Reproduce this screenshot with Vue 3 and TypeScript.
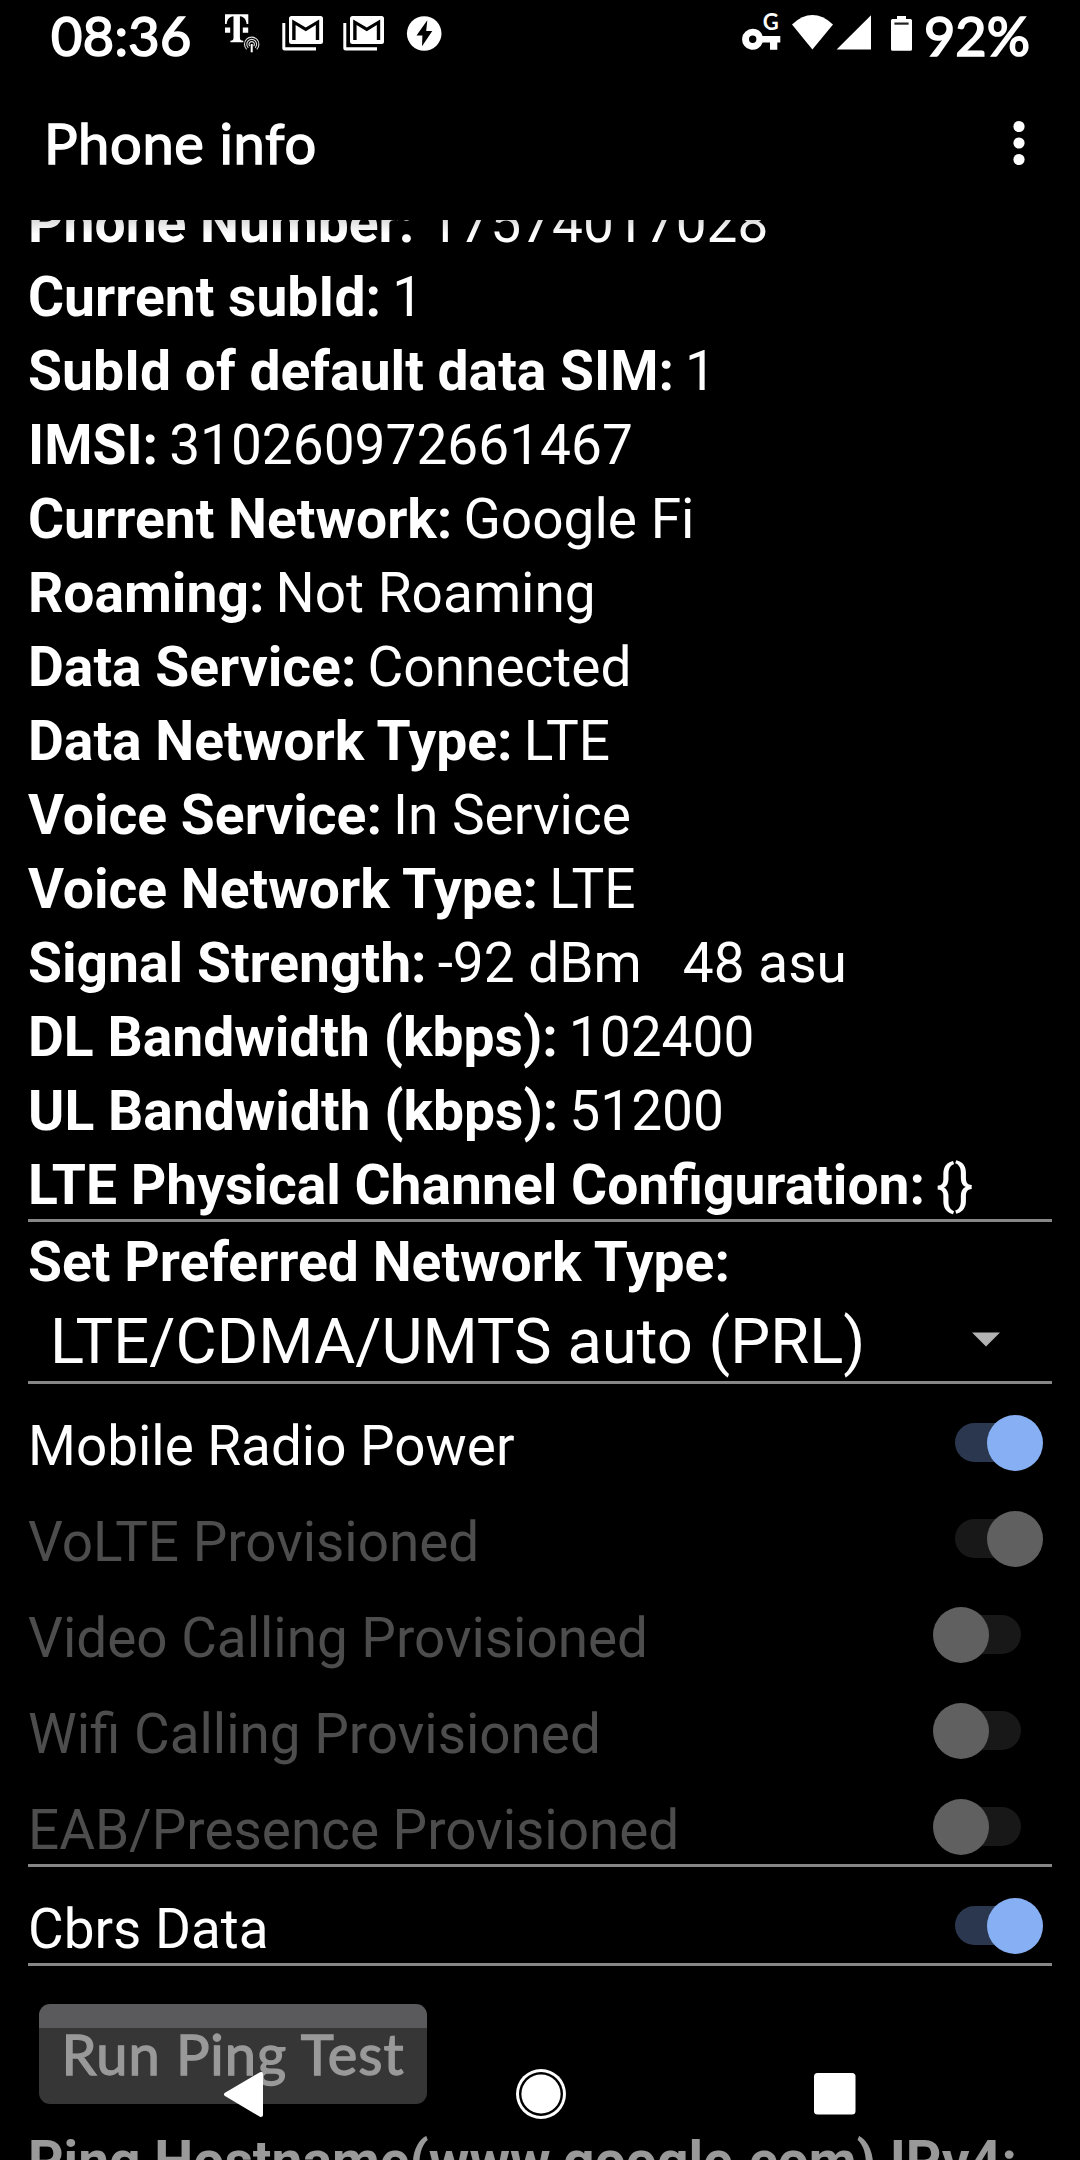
<script setup lang="ts">
interface InfoRow { label: string; value: string; wide?: boolean }
interface SwitchRow { label: string; on: boolean; disabled: boolean }

const info: InfoRow[] = [
  { label: 'Phone Number:', value: '17574017028', wide: true },
  { label: 'Current subId:', value: '1' },
  { label: 'SubId of default data SIM:', value: '1' },
  { label: 'IMSI:', value: '310260972661467' },
  { label: 'Current Network:', value: 'Google Fi' },
  { label: 'Roaming:', value: 'Not Roaming' },
  { label: 'Data Service:', value: 'Connected' },
  { label: 'Data Network Type:', value: 'LTE' },
  { label: 'Voice Service:', value: 'In Service' },
  { label: 'Voice Network Type:', value: 'LTE' },
  { label: 'Signal Strength:', value: '-92 dBm   48 asu' },
  { label: 'DL Bandwidth (kbps):', value: '102400' },
  { label: 'UL Bandwidth (kbps):', value: '51200' },
  { label: 'LTE Physical Channel Configuration:', value: '{}' },
]

const switches: SwitchRow[] = [
  { label: 'Mobile Radio Power', on: true, disabled: false },
  { label: 'VoLTE Provisioned', on: true, disabled: true },
  { label: 'Video Calling Provisioned', on: false, disabled: true },
  { label: 'Wifi Calling Provisioned', on: false, disabled: true },
  { label: 'EAB/Presence Provisioned', on: false, disabled: true },
]
</script>

<template>
  <div class="screen">
    <header class="status">
      <span class="clock">08:36</span>
      <svg class="ic-carrier" width="38" height="70" viewBox="223 0 38 70">
        <path fill="#fff" d="M225 14.3H248.3V24H246.6C246.2 19.5 244 16.6 239.9 16.3V37.5C239.9 39.8 240.6 40.6 243.3 40.8V42.2H230.4V40.8C232.8 40.6 233.5 39.8 233.5 37.5V16.3C229.4 16.6 227.1 19.5 226.7 24H225ZM225 27.5H230.2V32.7H225ZM242.8 27.5H248.2V32.7H242.8Z" />
        <g fill="none" stroke="#ddd" stroke-width="1.1">
          <path d="M246.6 49.4A7.2 7.2 0 1 1 256.8 49.4" />
          <path d="M248.3 47.8A4.9 4.9 0 1 1 255.1 47.8" />
          <path d="M249.8 46.2A2.7 2.7 0 1 1 253.6 46.2" />
        </g>
        <path stroke="#fff" stroke-width="2" d="M251.7 44V52.3" />
      </svg>
      <svg v-for="n in 2" :key="n" class="ic-mail" width="42" height="70" viewBox="282 0 42 70">
        <path fill="#fff" d="M282.3 23H285.3V47.2H316V50.5H284.8Q282.3 50.5 282.3 48Z" />
        <rect x="289" y="16" width="34" height="28" rx="2.5" fill="#fff" />
        <path fill="#000" d="M292.2 40V19.4L305.8 27.6L319.2 19.4V40H315.8V25L305.8 31.2L295.6 25V40Z" />
      </svg>
      <svg class="ic-flash" width="36" height="70" viewBox="406 0 36 70">
        <circle cx="424.2" cy="33.5" r="17.3" fill="#fff" />
        <path fill="#000" d="M427.3 20.3L416.5 35.4H422.4L422 46.3L432.3 31H426.2Z" />
      </svg>
      <span class="grow"></span>
      <svg class="ic-sys" width="172" height="70" viewBox="742 0 172 70">
        <path fill="#fff" fill-rule="evenodd" d="M752.7 28.8A10.5 10.5 0 1 0 762.6 42.5H770V49.7H777.3V42.5H780.3V36H762.6A10.5 10.5 0 0 0 752.7 28.8ZM752.7 35.6A3.7 3.7 0 1 1 752.7 43A3.7 3.7 0 1 1 752.7 35.6Z" />
        <path fill="#fff" d="M792 24.4Q812.4 5.8 833 24.4L812.4 49.4Z" />
        <path fill="#fff" d="M836.6 49.6L871 15.3V49.6Z" />
        <path fill="#fff" d="M897 16H906V19H910.5Q912 19 912 20.5V49.2Q912 50.7 910.5 50.7H892.5Q891 50.7 891 49.2V20.5Q891 19 892.5 19H897Z" />
        <rect x="894.4" y="22.5" width="14.2" height="2.2" fill="#222" />
        <text x="762.8" y="30" class="key-g">G</text>
      </svg>
      <span class="battery">92%</span>
    </header>

    <div class="toolbar">
      <h1 class="title">Phone info</h1>
      <svg width="14" height="46" viewBox="0 0 14 46" fill="#fff">
        <circle cx="7" cy="6.5" r="5.6" /><circle cx="7" cy="23" r="5.6" /><circle cx="7" cy="39.5" r="5.6" />
      </svg>
    </div>

    <main class="content">
      <div class="info">
        <div v-for="row in info" :key="row.label" class="row">
          <b>{{ row.label }}</b><span class="value" :class="{ wide: row.wide }">{{ row.value }}</span>
        </div>
      </div>
      <hr />
      <div class="preferred"><b>Set Preferred Network Type:</b></div>
      <div class="spinner">
        <span>LTE/CDMA/UMTS auto (PRL)</span>
        <svg width="28" height="15" viewBox="0 0 28 15"><path fill="#b3b3b3" d="M0 .4H28L14 14.4Z" /></svg>
      </div>
      <hr />
      <div class="switches">
        <div v-for="s in switches" :key="s.label" class="switch-row" :class="{ disabled: s.disabled }">
          <span>{{ s.label }}</span>
          <span class="switch" :class="{ on: s.on }"><i class="track"></i><i class="thumb"></i></span>
        </div>
      </div>
      <hr />
      <div class="switch-row">
        <span>Cbrs Data</span>
        <span class="switch on"><i class="track"></i><i class="thumb"></i></span>
      </div>
      <hr />
      <button class="ping"><span>Run Ping Test</span></button>
      <div class="host"><b>Ping Hostname(www.google.com) IPv4:</b></div>
    </main>

    <nav class="navbar">
      <svg width="42" height="48" viewBox="222 2070 42 48">
        <path fill="#fff" stroke="#fff" stroke-width="4" stroke-linejoin="round" d="M226 2094.4L261 2074V2115Z" />
      </svg>
      <svg class="home" width="52" height="52" viewBox="-26 -26 52 52">
        <circle r="25" fill="#fff" /><circle r="22" fill="#000" /><circle r="19.6" fill="#fff" />
      </svg>
      <svg width="42" height="42" viewBox="0 0 42 42"><rect width="41.5" height="41.5" rx="3.5" fill="#fff" /></svg>
    </nav>
  </div>
</template>

<style>
body { margin: 0; background: #000; }
</style>

<style scoped>
.screen {
  position: relative;
  width: 1080px;
  height: 2160px;
  overflow: hidden;
  display: flex;
  flex-direction: column;
  background: #000;
  color: #fff;
  font: 55px/74px Roboto, sans-serif;
}
b { font-size: 55.2px; }
.status {
  display: flex;
  height: 70px;
  flex: none;
  font: 54px/71px Lato, sans-serif;
  -webkit-text-stroke: 1.7px currentColor;
}
.status svg { flex: none; -webkit-text-stroke: 0; }
.clock { width: 172px; padding-left: 51px; letter-spacing: 0.4px; }
.ic-mail { margin-left: 21px; }
.ic-mail + .ic-mail { margin-left: 19px; }
.ic-flash { margin-left: 21px; }
.grow { flex: 1; }
.battery { width: 156px; padding-left: 10px; white-space: nowrap; }
.key-g { font: bold 22px Lato, sans-serif; fill: #fff; }
.toolbar {
  flex: none;
  height: 150px;
  box-sizing: border-box;
  padding: 0 54px 4px 44px;
  display: flex;
  align-items: center;
  justify-content: space-between;
}
.title {
  margin: 0;
  font: 56px/74px Lato, sans-serif;
  letter-spacing: 0.65px;
  -webkit-text-stroke: 1.4px currentColor;
}
.content {
  position: relative;
  flex: 1;
  min-height: 0;
  overflow: hidden;
  display: flex;
  flex-direction: column;
  padding: 0 28px;
}
.content::before {
  content: "";
  position: absolute;
  left: 0;
  right: 0;
  top: 0;
  height: 14px;
  background: linear-gradient(rgba(0, 0, 0, 0.14), transparent);
}
.info { margin-top: -34px; height: 1033px; flex: none; }
.row { height: 74px; white-space: pre; }
.value { margin-left: 11px; }
.value.wide { margin-left: 14px; }
hr { flex: none; width: 100%; height: 3px; margin: 0; border: 0; background: #868686; }
.preferred { flex: none; height: 76px; padding-top: 3px; box-sizing: border-box; }
.spinner {
  flex: none;
  height: 83px;
  padding: 0 52px 0 22px;
  display: flex;
  align-items: center;
  justify-content: space-between;
  font-size: 63.3px;
}
.spinner span { padding-top: 3px; }
.switches { flex: none; height: 480px; }
.switch-row {
  flex: none;
  height: 96px;
  padding-right: 9px;
  display: flex;
  justify-content: space-between;
  align-items: flex-start;
  font-size: 54.85px;
}
.switch-row > span:first-child { padding-top: 25px; }
.switch {
  position: relative;
  width: 110px;
  height: 56px;
  margin-top: 31px;
}
.track {
  position: absolute;
  left: 4px;
  top: 8px;
  width: 84px;
  height: 39px;
  border-radius: 20px;
  background: #181818;
}
.thumb {
  position: absolute;
  left: 0;
  top: 0;
  width: 56px;
  height: 56px;
  border-radius: 50%;
  background: #606060;
}
.on .track { left: 22px; background: #2b374e; }
.on .thumb { left: 54px; background: #87aff3; }
.disabled { color: #4d4d4d; }
.disabled .track { background: #181818; }
.disabled .thumb { background: #606060; }
.ping {
  flex: none;
  width: 388px;
  height: 100px;
  margin: 38px 0 0 11px;
  padding: 0;
  border: 0;
  border-radius: 11px;
  background: #5a5a5c;
  color: #fff;
  font: 56px/100px Lato, sans-serif;
  letter-spacing: 0.95px;
  -webkit-text-stroke: 1.3px currentColor;
  white-space: nowrap;
}
.host { flex: none; margin-top: 20px; white-space: nowrap; }
.navbar {
  position: absolute;
  left: 0;
  right: 0;
  bottom: 0;
  height: 132px;
  padding: 0 224px 0 222px;
  box-sizing: border-box;
  display: flex;
  align-items: center;
  justify-content: space-between;
  background: rgba(0, 0, 0, 0.4);
}
.home { margin-left: 3px; }
</style>
